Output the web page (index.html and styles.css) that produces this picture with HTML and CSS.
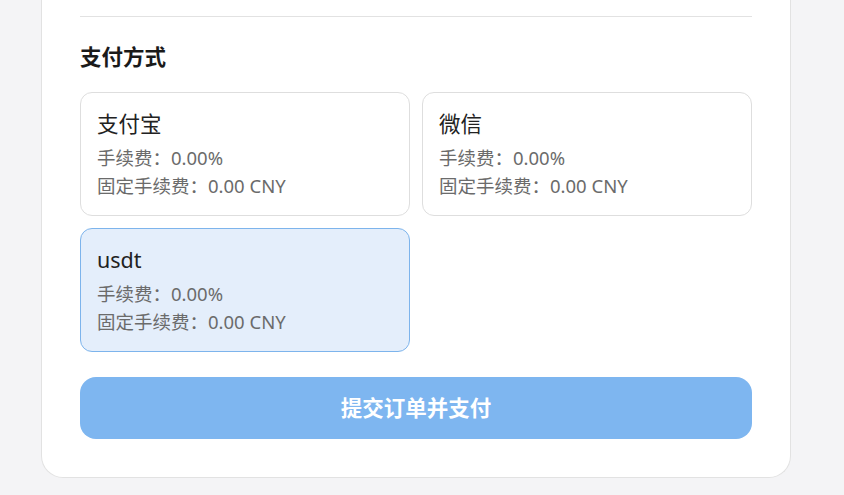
FILE: index.html
```html
<!DOCTYPE html>
<html lang="zh-CN">
<head>
  <meta charset="UTF-8" />
  <meta name="viewport" content="width=device-width, initial-scale=1.0" />
  <title>确认订单</title>
  <link rel="stylesheet" href="styles.css">
</head>
<body>
  <div class="panel">
    <div class="divider"></div>

    <h2 class="section-title">支付方式</h2>
    <div class="pay-list">
      <div class="pay-item">
        <div class="pay-name">支付宝</div>
        <div class="pay-fee">手续费：0.00%</div>
        <div class="pay-fee">固定手续费：0.00 CNY</div>
      </div>
      <div class="pay-item">
        <div class="pay-name">微信</div>
        <div class="pay-fee">手续费：0.00%</div>
        <div class="pay-fee">固定手续费：0.00 CNY</div>
      </div>
      <div class="pay-item active">
        <div class="pay-name">usdt</div>
        <div class="pay-fee">手续费：0.00%</div>
        <div class="pay-fee">固定手续费：0.00 CNY</div>
      </div>
    </div>

    <button class="submit-btn">提交订单并支付</button>
  </div>
</body>
</html>
```

FILE: styles.css
```css
body {
  margin: 0;
  background-color: #f4f4f6;
  font-family: "Noto Sans", "Noto Sans CJK SC", sans-serif;
  color: #222;
}
.panel {
  width: 750px;
  box-sizing: border-box;
  margin-left: 41px;
  background: white;
  border: 1px solid #e2e2e2;
  border-top: none;
  border-radius: 0 0 22px 22px;
  padding: 16px 38px 38px;
}
.divider {
  height: 1px;
  background: #e2e2e2;
}
.section-title {
  font-size: 21.5px;
  font-weight: bold;
  line-height: 28px;
  margin: 26px 0 21px;
  color: #1a1a1a;
}
.pay-list {
  display: grid;
  grid-template-columns: 1fr 1fr;
  gap: 12px;
}
.pay-item {
  border: 1px solid #dedede;
  border-radius: 12px;
  padding: 16px 16px 15px;
  background: white;
}
.pay-item.active {
  background: #e4eefb;
  border-color: #7db4ec;
}
.pay-name {
  font-size: 21.5px;
  line-height: 30px;
  margin-bottom: 5px;
  color: #222;
}
.pay-fee {
  font-size: 18.5px;
  line-height: 28px;
  color: #6b6b6b;
}
.submit-btn {
  display: block;
  width: 100%;
  height: 62px;
  margin-top: 25px;
  padding: 0 0 3px;
  border: none;
  border-radius: 16px;
  background-color: #7eb6f0;
  color: white;
  font-family: inherit;
  font-size: 21.5px;
  font-weight: bold;
  cursor: pointer;
}
```
